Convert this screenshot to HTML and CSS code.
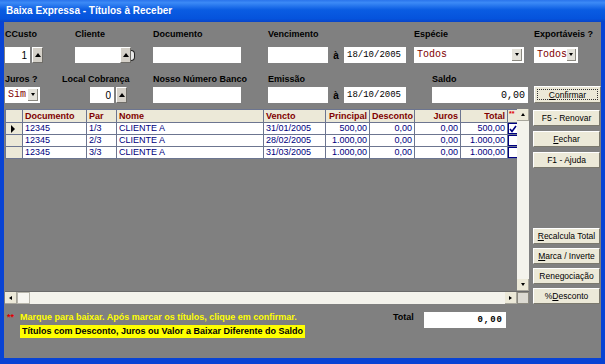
FILE: index.html
```html
<!DOCTYPE html>
<html lang="pt">

<head>
    <meta charset="UTF-8" />
    <title>Baixa Expressa - Títulos à Receber</title>
    <link rel="stylesheet" href="styles.css">
</head>

<body>
    <div class="window">
        <div class="titlebar">Baixa Expressa - Títulos à Receber</div>

        <div class="client">
            <!-- filtros, linha 1 -->
            <div class="row row-top">
                <div class="field f-ccusto">
                    <span class="lbl">CCusto</span>
                    <div class="ctl">
                        <input class="txt num w-ccusto" value="1">
                        <span class="spin gap"><i class="up"></i></span>
                    </div>
                </div>
                <div class="field f-cliente">
                    <span class="lbl">Cliente</span>
                    <div class="ctl">
                        <input class="txt w-cliente" value="">
                        <span class="spin"><i class="up"></i></span>
                        <span class="stub"></span>
                    </div>
                </div>
                <div class="field f-doc">
                    <span class="lbl">Documento</span>
                    <div class="ctl"><input class="txt w-doc" value=""></div>
                </div>
                <div class="field f-venc">
                    <span class="lbl">Vencimento</span>
                    <div class="ctl">
                        <input class="txt w-date1" value="">
                        <span class="a">à</span>
                        <input class="txt mono w-date2" value="18/10/2005">
                    </div>
                </div>
                <div class="field f-especie">
                    <span class="lbl">Espécie</span>
                    <div class="ctl">
                        <div class="combo w-especie"><span class="val">Todos</span><span class="drop"><i class="down"></i></span></div>
                    </div>
                </div>
                <div class="field">
                    <span class="lbl">Exportáveis ?</span>
                    <div class="ctl">
                        <div class="combo w-export"><span class="val">Todos</span><span class="drop"><i class="down"></i></span></div>
                    </div>
                </div>
            </div>

            <!-- filtros, linha 2 -->
            <div class="row row-bottom">
                <div class="field f-juros">
                    <span class="lbl">Juros ?</span>
                    <div class="ctl">
                        <div class="combo w-juros"><span class="val">Sim</span><span class="drop"><i class="down"></i></span></div>
                    </div>
                </div>
                <div class="field f-local">
                    <span class="lbl">Local Cobrança</span>
                    <div class="ctl indent">
                        <input class="txt num w-local" value="0">
                        <span class="spin gap"><i class="up"></i></span>
                    </div>
                </div>
                <div class="field f-nosso">
                    <span class="lbl">Nosso Número Banco</span>
                    <div class="ctl"><input class="txt w-doc" value=""></div>
                </div>
                <div class="field f-emissao">
                    <span class="lbl">Emissão</span>
                    <div class="ctl">
                        <input class="txt w-date1" value="">
                        <span class="a">à</span>
                        <input class="txt mono w-date2" value="18/10/2005">
                    </div>
                </div>
                <div class="field f-saldo">
                    <span class="lbl">Saldo</span>
                    <div class="ctl"><input class="txt num mono big w-saldo" value="0,00"></div>
                </div>
                <button class="btn confirm"><span class="focus"><u>C</u>onfirmar</span></button>
            </div>

            <div class="main">
                <div class="grid">
                    <div class="grid-top">
                        <div class="grid-body">
                            <table class="titles">
                                <colgroup>
                                    <col class="c-ind">
                                    <col class="c-doc">
                                    <col class="c-par">
                                    <col class="c-nome">
                                    <col class="c-venc">
                                    <col class="c-princ">
                                    <col class="c-desc">
                                    <col class="c-juros">
                                    <col class="c-total">
                                    <col class="c-chk">
                                </colgroup>
                                <thead>
                                    <tr>
                                        <th class="ind"></th>
                                        <th>Documento</th>
                                        <th>Par</th>
                                        <th>Nome</th>
                                        <th>Vencto</th>
                                        <th class="num">Principal</th>
                                        <th class="num">Desconto</th>
                                        <th class="num">Juros</th>
                                        <th class="num">Total</th>
                                        <th class="mark">**</th>
                                    </tr>
                                </thead>
                                <tbody>
                                    <tr>
                                        <td class="ind"><i class="cur"></i></td>
                                        <td>12345</td>
                                        <td>1/3</td>
                                        <td>CLIENTE A</td>
                                        <td>31/01/2005</td>
                                        <td class="num">500,00</td>
                                        <td class="num">0,00</td>
                                        <td class="num">0,00</td>
                                        <td class="num">500,00</td>
                                        <td class="chk"><span class="box"><svg width="8" height="8" viewBox="0 0 8 8"><polyline points="1,4 3,6.5 7,1" fill="none" stroke="#000080" stroke-width="1.6"/></svg></span></td>
                                    </tr>
                                    <tr>
                                        <td class="ind"></td>
                                        <td>12345</td>
                                        <td>2/3</td>
                                        <td>CLIENTE A</td>
                                        <td>28/02/2005</td>
                                        <td class="num">1.000,00</td>
                                        <td class="num">0,00</td>
                                        <td class="num">0,00</td>
                                        <td class="num">1.000,00</td>
                                        <td class="chk"><span class="box"></span></td>
                                    </tr>
                                    <tr>
                                        <td class="ind"></td>
                                        <td>12345</td>
                                        <td>3/3</td>
                                        <td>CLIENTE A</td>
                                        <td>31/03/2005</td>
                                        <td class="num">1.000,00</td>
                                        <td class="num">0,00</td>
                                        <td class="num">0,00</td>
                                        <td class="num">1.000,00</td>
                                        <td class="chk"><span class="box"></span></td>
                                    </tr>
                                </tbody>
                            </table>
                        </div>
                        <div class="vscroll">
                            <span class="arrow"><i class="up small"></i></span>
                            <span class="track"></span>
                            <span class="arrow"><i class="down small"></i></span>
                        </div>
                    </div>
                    <div class="hscroll">
                        <span class="arrow"><i class="left"></i></span>
                        <span class="thumb"></span>
                        <span class="track"></span>
                        <span class="arrow"><i class="right"></i></span>
                        <span class="corner"></span>
                    </div>
                </div>

                <div class="side">
                    <div class="group">
                        <button class="btn">F5 - Renovar</button>
                        <button class="btn"><u>F</u>echar</button>
                        <button class="btn">F1 - Ajuda</button>
                    </div>
                    <div class="group tight">
                        <button class="btn"><u>R</u>ecalcula Total</button>
                        <button class="btn"><u>M</u>arca / Inverte</button>
                        <button class="btn">Renegociação</button>
                        <button class="btn">% <u>D</u>esconto</button>
                    </div>
                </div>
            </div>

            <div class="footer">
                <div class="notes">
                    <p class="hint"><span class="stars">**</span>Marque para baixar. Após marcar os títulos, clique em confirmar.</p>
                    <p class="warn">Títulos com Desconto, Juros ou Valor a Baixar Diferente do Saldo</p>
                </div>
                <span class="total-lbl">Total</span>
                <input class="txt num total" value="0,00">
            </div>
        </div>
    </div>
</body>

</html>
```

FILE: styles.css
```css
/* Reset */
* {
    margin: 0;
    padding: 0;
    box-sizing: border-box;
}

body {
    font-family: "Liberation Sans", Arial, sans-serif;
    background-color: #808080;
    color: #000;
}

/* Window frame */
.window {
    width: 605px;
    height: 364px;
    display: flex;
    flex-direction: column;
    background-color: #0843d4;
}

.titlebar {
    height: 22px;
    line-height: 22px;
    padding-left: 6px;
    color: #fff;
    font-size: 10px;
    font-weight: bold;
    background: linear-gradient(#2a74ec 0%, #3c8af6 12%, #0a5ce2 45%, #0553dc 85%, #0844c8 100%);
}

.client {
    flex: 1;
    margin: 0 4px 6px 4px;
    padding: 6px 0 0 1px;
    background-color: #808080;
    display: flex;
    flex-direction: column;
}

/* Filter rows */
.row {
    display: flex;
    align-items: flex-end;
}

.row-bottom {
    margin-top: 10px;
}

.field {
    display: flex;
    flex-direction: column;
}

.lbl {
    height: 13px;
    line-height: 13px;
    font-size: 9px;
    font-weight: bold;
    white-space: nowrap;
}

.row-top .lbl {
    margin-bottom: 6px;
}

.row-bottom .lbl {
    margin-bottom: 1px;
}

.ctl {
    display: flex;
    align-items: center;
    height: 16px;
}

.ctl.indent {
    padding-left: 28px;
}

.f-ccusto { width: 70px; }
.f-cliente { width: 78px; }
.f-doc { width: 115px; }
.f-venc { width: 146px; }
.f-especie { width: 120px; }
.f-juros { width: 57px; }
.f-local { width: 91px; }
.f-nosso { width: 115px; }
.f-emissao { width: 164px; }
.f-saldo { width: 102px; }

.txt {
    height: 16px;
    border: none;
    outline: none;
    background-color: #fff;
    padding: 0 3px;
    font-family: "Liberation Sans", Arial, sans-serif;
    font-size: 10px;
    color: #000;
}

.txt.num {
    text-align: right;
}

.mono {
    font-family: "Liberation Mono", "Courier New", monospace;
    font-size: 9px;
}

.mono.big {
    font-size: 10px;
}

.w-ccusto { width: 25px; }
.w-cliente { width: 45px; }
.w-doc { width: 88px; }
.w-date1 { width: 60px; }
.w-date2 { width: 62px; }
.w-local { width: 24px; }
.w-saldo { width: 96px; }

.a {
    width: 16px;
    text-align: center;
    font-size: 10px;
    font-weight: bold;
}

.spin {
    width: 11px;
    height: 16px;
    background-color: #d4d0c8;
    border-top: 1px solid #fff;
    border-left: 1px solid #fff;
    border-right: 1px solid #6f6d68;
    border-bottom: 1px solid #6f6d68;
    display: flex;
    align-items: center;
    justify-content: center;
}

.spin.gap {
    margin-left: 2px;
}

.stub {
    width: 4px;
    height: 11px;
    background-color: #e8e8e8;
    border: 1px solid #222;
    border-left: none;
    border-radius: 0 5px 5px 0;
}

/* arrows */
.up,
.down,
.left,
.right {
    display: block;
    width: 0;
    height: 0;
    border: 3px solid transparent;
}

.up {
    border-bottom: 4px solid #000;
    border-top-width: 0;
    margin-top: -1px;
}

.down {
    border-top: 3px solid #000;
    border-bottom-width: 0;
    border-left-width: 2px;
    border-right-width: 2px;
}

.up.small {
    border-bottom-width: 3px;
    border-left-width: 2px;
    border-right-width: 2px;
}

.left {
    border-right: 3px solid #000;
    border-left-width: 0;
    border-top-width: 2px;
    border-bottom-width: 2px;
}

.right {
    border-left: 3px solid #000;
    border-right-width: 0;
    border-top-width: 2px;
    border-bottom-width: 2px;
}

/* combos */
.combo {
    height: 16px;
    display: flex;
    background-color: #fff;
}

.combo .val {
    flex: 1;
    padding-left: 3px;
    line-height: 16px;
    font-family: "Liberation Mono", "Courier New", monospace;
    font-size: 10px;
    color: #800000;
}

.combo .drop {
    width: 10px;
    margin: 2px 2px 2px 0;
    background-color: #e4e2da;
    border-right: 1px solid #8a8880;
    border-bottom: 1px solid #8a8880;
    display: flex;
    align-items: center;
    justify-content: center;
}

.w-especie { width: 110px; }
.w-export { width: 44px; }
.w-juros { width: 35px; }

/* buttons */
.btn {
    width: 67px;
    height: 16px;
    background-color: #ece9d8;
    border-top: 1px solid #fff;
    border-left: 1px solid #fff;
    border-right: 1px solid #7a786d;
    border-bottom: 1px solid #7a786d;
    font-family: "Liberation Sans", Arial, sans-serif;
    font-size: 8.5px;
    color: #000;
    display: flex;
    align-items: center;
    justify-content: center;
}

.btn.confirm {
    height: 17px;
    margin-bottom: 0;
    padding: 2px;
}

.btn .focus {
    width: 100%;
    height: 100%;
    border: 1px dotted #333;
    display: flex;
    align-items: center;
    justify-content: center;
}

/* grid + side buttons */
.main {
    display: flex;
    gap: 4px;
    margin-top: 6px;
}

.grid {
    width: 524px;
    height: 195px;
    display: flex;
    flex-direction: column;
}

.grid-top {
    flex: 1;
    display: flex;
}

.grid-body {
    flex: 1;
    overflow: hidden;
    background-color: #808080;
}

.titles {
    width: 512px;
    table-layout: fixed;
    border-collapse: collapse;
    font-size: 9px;
}

.c-ind { width: 17px; }
.c-doc { width: 64px; }
.c-par { width: 30px; }
.c-nome { width: 147px; }
.c-venc { width: 62px; }
.c-princ { width: 44px; }
.c-desc { width: 45px; }
.c-juros { width: 46px; }
.c-total { width: 47px; }
.c-chk { width: 10px; }

.titles th,
.titles td {
    border: 1px solid #6c7590;
    padding: 0 2px;
    text-align: left;
    white-space: nowrap;
    overflow: hidden;
}

.titles th {
    height: 13px;
    background-color: #ece9d8;
    color: #800000;
    font-weight: bold;
}

.titles td {
    height: 12px;
    line-height: 11px;
    background-color: #fff;
    color: #000080;
}

.titles .num {
    text-align: right;
}

.titles .ind {
    background-color: #ece9d8;
    padding-left: 5px;
}

.titles .mark {
    padding: 0 1px;
    color: #e00000;
    font-size: 7px;
    vertical-align: top;
}

.titles .chk {
    padding: 0;
    background-color: #808080;
}

.cur {
    display: block;
    width: 0;
    height: 0;
    border-top: 4px solid transparent;
    border-bottom: 4px solid transparent;
    border-left: 4px solid #000;
}

.box {
    width: 10px;
    height: 11px;
    background-color: #fff;
    border: 1px solid #000080;
    display: flex;
    align-items: center;
    justify-content: center;
}

/* scrollbars */
.vscroll {
    width: 12px;
    display: flex;
    flex-direction: column;
    background-color: #f4f3ec;
}

.vscroll .track,
.hscroll .track {
    flex: 1;
}

.arrow {
    width: 12px;
    height: 12px;
    background-color: #ece9d8;
    border-right: 1px solid #a8a69c;
    border-bottom: 1px solid #a8a69c;
    display: flex;
    align-items: center;
    justify-content: center;
}

.hscroll {
    height: 13px;
    display: flex;
    align-items: stretch;
    background-color: #f4f3ec;
    border-top: 1px solid #6a6a6a;
}

.hscroll .arrow {
    height: 12px;
}

.hscroll .thumb {
    width: 13px;
    background-color: #f7f6f1;
    border: 1px solid #b8b6ac;
}

.hscroll .corner {
    width: 12px;
    background-color: #dcdad2;
    border: 1px solid #8c8a80;
}

.side {
    width: 67px;
    height: 195px;
    display: flex;
    flex-direction: column;
    justify-content: space-between;
}

.group {
    display: flex;
    flex-direction: column;
    gap: 5px;
    padding-top: 1px;
}

.group.tight {
    gap: 4px;
    padding-top: 0;
}

/* footer */
.footer {
    display: flex;
    align-items: flex-start;
    padding-top: 7px;
}

.notes {
    width: 388px;
    font-size: 9px;
    font-weight: bold;
}

.hint {
    display: flex;
    height: 13px;
    line-height: 13px;
    color: #ffff00;
    white-space: nowrap;
}

.stars {
    width: 15px;
    padding-left: 2px;
    color: #e00000;
}

.warn {
    width: 285px;
    height: 13px;
    line-height: 13px;
    margin: 1px 0 0 15px;
    padding-left: 2px;
    background-color: #ffff00;
    color: #000;
    white-space: nowrap;
}

.total-lbl {
    width: 31px;
    padding-top: 1px;
    font-size: 9px;
    font-weight: bold;
}

.txt.total {
    width: 82px;
    margin-top: 1px;
    font-family: "Liberation Mono", "Courier New", monospace;
    font-size: 9px;
    font-weight: bold;
    letter-spacing: 1px;
}
```
